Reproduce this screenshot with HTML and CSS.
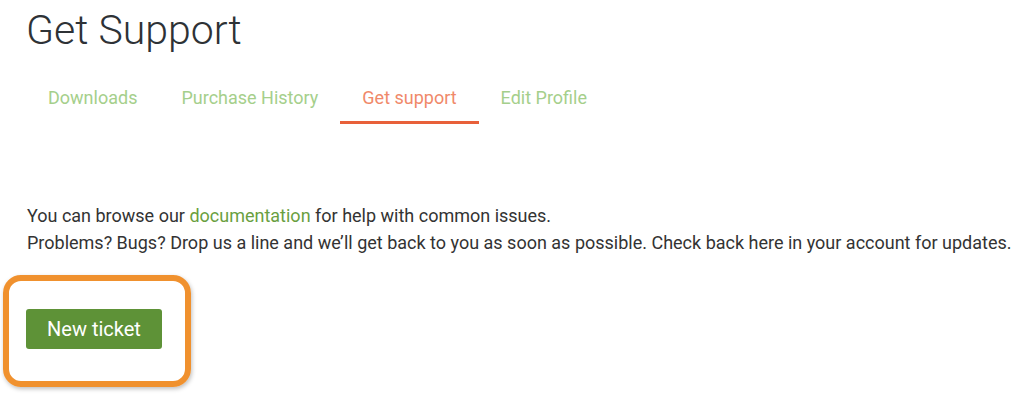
FILE: index.html
```html
<!DOCTYPE html>
<html lang="en">
<head>
  <meta charset="UTF-8" />
  <title>Get Support</title>
  <link rel="stylesheet" href="styles.css">
</head>
<body>

<div class="page">
  <h1>Get Support</h1>

  <ul class="tabs">
    <li><a href="#">Downloads</a></li>
    <li><a href="#">Purchase History</a></li>
    <li class="active"><a href="#">Get support</a></li>
    <li><a href="#">Edit Profile</a></li>
  </ul>

  <div class="support">
    <p>You can browse our <a href="#">documentation</a> for help with common issues.<br>
    Problems? Bugs? Drop us a line and we’ll get back to you as soon as possible. Check back here in your account for updates.</p>

    <div class="actions">
      <button class="btn">New ticket</button>
      <div class="highlight"></div>
    </div>
  </div>

  <div class="chat-bubble"></div>
</div>

</body>
</html>
```

FILE: styles.css
```css
html, body {
  margin: 0;
  height: 100%;
}

body {
  font-family: Roboto, 'Noto Sans', sans-serif;
  background: #fff;
  color: #333;
}

.page {
  position: relative;
  height: 100%;
  padding: 0 26px;
  overflow: hidden;
  box-sizing: border-box;
}

h1 {
  margin: 0;
  padding-top: 6px;
  font-size: 41px;
  font-weight: 300;
  line-height: 48px;
  color: #2e3236;
}

.tabs {
  list-style: none;
  margin: 25px 0 0;
  padding: 0;
  display: flex;
}

.tabs li a {
  display: block;
  padding: 8px 22px 13px;
  font-size: 18px;
  line-height: 21px;
  color: #a5cf8b;
  text-decoration: none;
  border-bottom: 3px solid transparent;
}

.tabs li.active a {
  color: #f0896a;
  border-bottom-color: #e8603a;
}

.support {
  margin-top: 78px;
}

.support p {
  margin: 0;
  padding-left: 1px;
  font-size: 18px;
  line-height: 27px;
  color: #333;
  white-space: nowrap;
}

.support p a {
  color: #6a9f3f;
  text-decoration: none;
}

.actions {
  position: relative;
  margin-top: 53px;
}

.btn {
  font-family: Roboto, 'Noto Sans', sans-serif;
  background: #5e9237;
  color: #fff;
  font-size: 20px;
  border: none;
  border-radius: 3px;
  padding: 0;
  height: 40px;
  width: 136px;
  cursor: pointer;
}

.highlight {
  position: absolute;
  left: -23px;
  top: -34px;
  width: 176px;
  height: 100px;
  border: 6px solid #f0912e;
  border-radius: 18px;
  box-shadow: 1px 2px 4px rgba(0, 0, 0, 0.25);
}

.chat-bubble {
  position: absolute;
  right: -54px;
  bottom: -54px;
  width: 60px;
  height: 60px;
  border-radius: 50%;
  background: #4a6ee0;
}
```
